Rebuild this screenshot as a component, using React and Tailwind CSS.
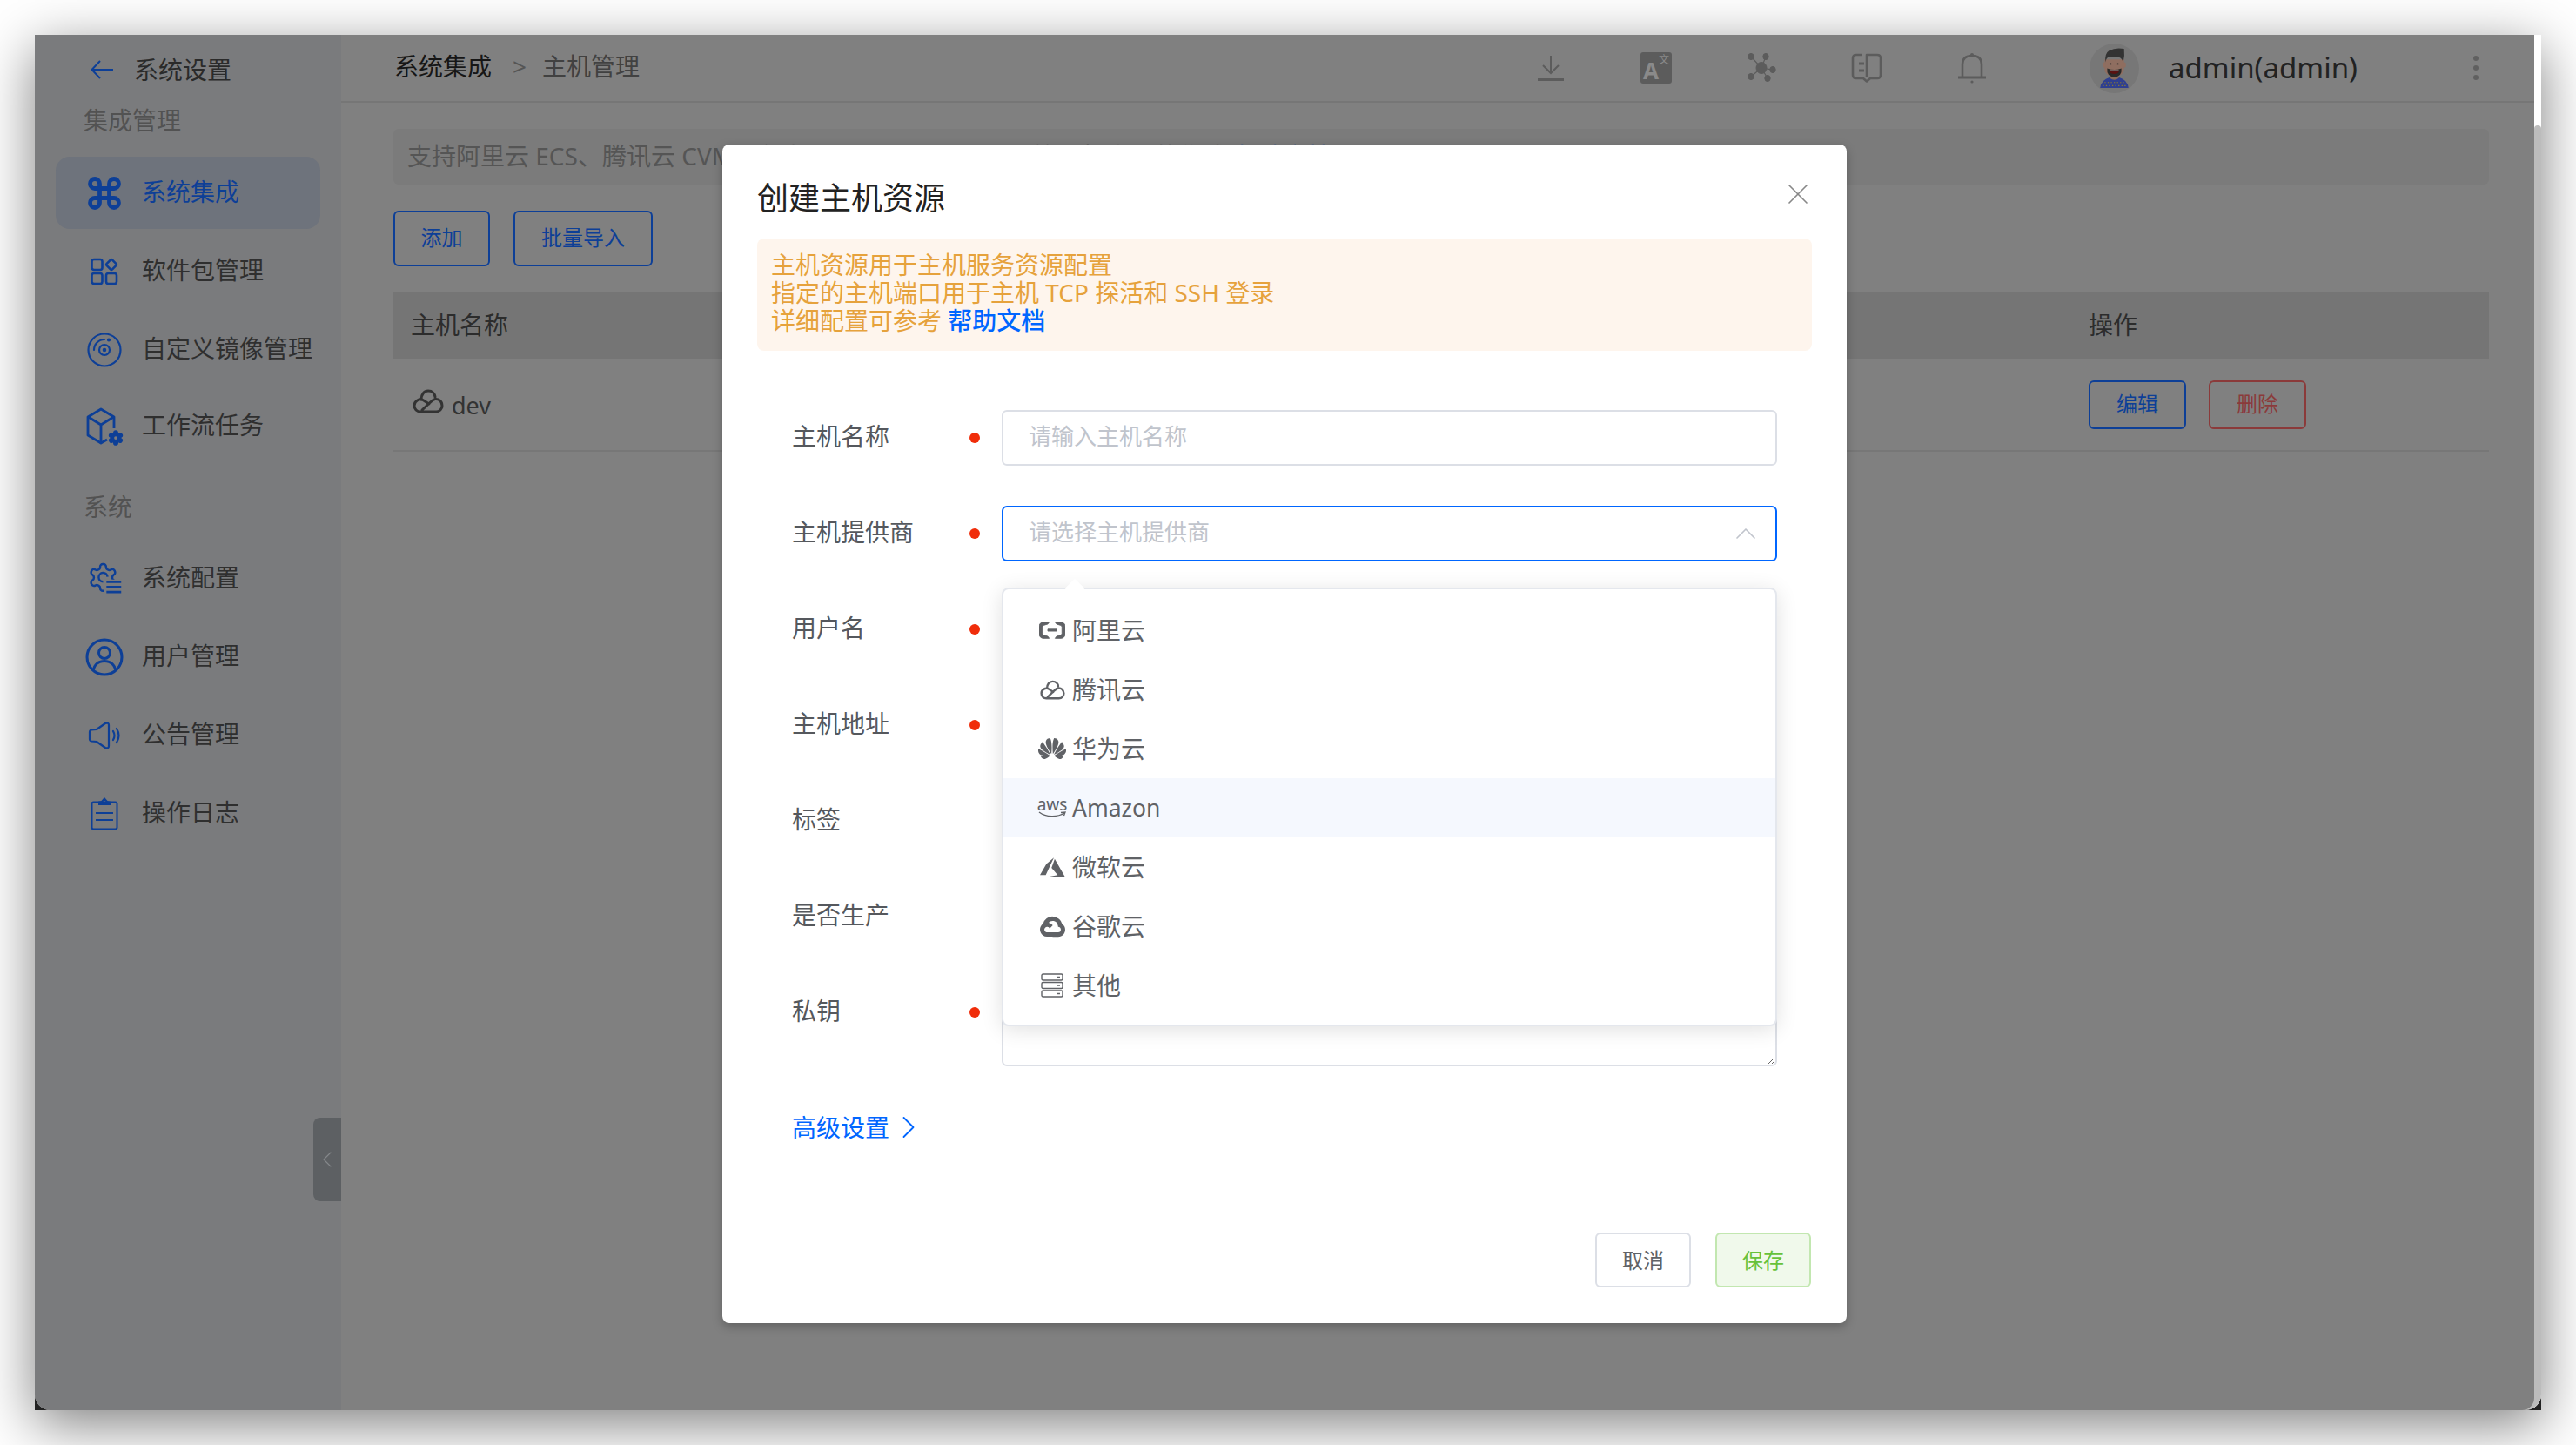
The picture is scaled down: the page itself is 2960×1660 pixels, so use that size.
// Create-host dialog over the integration settings page
import { ChevronLeft, ChevronRight, ChevronUp, Command, X } from 'lucide-react'
import { SiAlibabacloud, SiGooglecloud, SiHuawei } from 'react-icons/si'

const GEAR = 'M12.22 2h-.44a2 2 0 0 0-2 2v.18a2 2 0 0 1-1 1.73l-.43.25a2 2 0 0 1-2 0l-.15-.08a2 2 0 0 0-2.73.73l-.22.38a2 2 0 0 0 .73 2.73l.15.1a2 2 0 0 1 1 1.72v.51a2 2 0 0 1-1 1.74l-.15.09a2 2 0 0 0-.73 2.73l.22.38a2 2 0 0 0 2.73.73l.15-.08a2 2 0 0 1 2 0l.43.25a2 2 0 0 1 1 1.73V20a2 2 0 0 0 2 2h.44a2 2 0 0 0 2-2v-.18a2 2 0 0 1 1-1.73l.43-.25a2 2 0 0 1 2 0l.15.08a2 2 0 0 0 2.73-.73l.22-.39a2 2 0 0 0-.73-2.73l-.15-.08a2 2 0 0 1-1-1.74v-.5a2 2 0 0 1 1-1.74l.15-.09a2 2 0 0 0 .73-2.73l-.22-.38a2 2 0 0 0-2.73-.73l-.15.08a2 2 0 0 1-2 0l-.43-.25a2 2 0 0 1-1-1.73V4a2 2 0 0 0-2-2z'

// ---- sidebar icons
function GridIcon() {
  return (
    <svg width="32" height="31" viewBox="0 0 32 31" fill="none" stroke="currentColor" strokeWidth="2.6">
      <rect x="1.5" y="2" width="12" height="12" rx="2.5" />
      <rect x="1.5" y="18" width="12" height="12" rx="2.5" />
      <rect x="18" y="18" width="12" height="12" rx="2.5" />
      <rect x="19.5" y="3.5" width="9" height="9" rx="1.5" transform="rotate(45 24 8)" />
    </svg>
  )
}
function DiscIcon() {
  return (
    <svg width="40" height="40" viewBox="0 0 40 40" fill="none" stroke="currentColor" strokeWidth="2.2">
      <circle cx="20" cy="20" r="18.5" />
      <circle cx="20" cy="20" r="6" />
      <circle cx="20" cy="20" r="1.2" fill="currentColor" />
      <path d="M8 20 A12 12 0 0 1 20 8" strokeLinecap="round" />
      <circle cx="25" cy="8.5" r="1" fill="currentColor" />
    </svg>
  )
}
function BoxGearIcon() {
  return (
    <svg width="43" height="44" viewBox="0 0 43 44" fill="none" stroke="currentColor" strokeWidth="2.8" strokeLinejoin="round">
      <path d="M24 37 L17 41 L2 32 V11 L17 2 L32 11 V24" />
      <path d="M2.5 11 L17 20 L31.5 11 M17 20 V40" />
      <svg x="25" y="26" width="18" height="18" viewBox="0 0 24 24" strokeWidth="3.5" fill="currentColor">
        <path d={GEAR} />
        <circle cx="12" cy="12" r="2.5" fill="#7a7b7d" stroke="none" />
      </svg>
    </svg>
  )
}
function ConfigIcon() {
  return (
    <svg width="40" height="40" viewBox="0 0 26 26" fill="none" stroke="currentColor" strokeWidth="1.6">
      <path d={GEAR} />
      <rect x="13" y="13.5" width="13" height="13" fill="#7a7b7d" stroke="none" />
      <path d="M15.3 11.5a3.3 3.3 0 1 0-3.3 3.6" />
      <path d="M14.5 15.2H25.5M14.5 19H25.5M14.5 22.8H25.5" strokeWidth="1.7" />
    </svg>
  )
}
function UserIcon() {
  return (
    <svg width="44" height="44" viewBox="0 0 44 44" fill="none" stroke="currentColor" strokeWidth="3">
      <circle cx="22" cy="22" r="20" />
      <circle cx="22" cy="17" r="6.5" />
      <path d="M9 37 C11 29 16 26.5 22 26.5 C28 26.5 33 29 35 37" />
    </svg>
  )
}
function SpeakerIcon() {
  return (
    <svg width="38" height="32" viewBox="0 0 38 32" fill="none" stroke="currentColor" strokeWidth="2.2" strokeLinejoin="round">
      <path d="M2 12 Q2 10 4 9.5 L10 9 L20 2 Q24 0.5 24 4 V28 Q24 31.5 20 30 L10 23 L4 22.5 Q2 22 2 20 Z" />
      <path d="M29 11 Q32 16 29 21 M33 8 Q38 16 33 24" strokeLinecap="round" />
    </svg>
  )
}
function ClipboardIcon() {
  return (
    <svg width="32" height="38" viewBox="0 0 32 38" fill="none" stroke="currentColor" strokeWidth="2">
      <rect x="1.5" y="5.5" width="29" height="31" rx="2" />
      <path d="M10 5.5 L13 5 L16 1.5 L19 5 L22 5.5 V8 H10 Z" />
      <path d="M6 18 H26 M6 26 H26" />
    </svg>
  )
}

// ---- provider icons
function TencentIcon({ className }) {
  return (
    <svg className={className} viewBox="0 0 36 28" fill="none" stroke="currentColor" strokeWidth="3" strokeLinecap="round">
      <path d="M10 12 C10 6 13.5 2 18 2 C22.5 2 25.5 5 26 9" />
      <path d="M19 17 L12 12.5 C8 10.5 2 13.5 2 19 C2 23 5 26 9 26 H27 C31 26 34 23 34 19 C34 14 30 11 26 11.5 C23.5 12 22 13.5 20 15.5 L11 24" />
    </svg>
  )
}
function AwsIcon() {
  return (
    <span className="flex flex-col items-center w-[32px]">
      <span className="text-[19px] leading-[16px] text-[#606266]">aws</span>
      <svg width="32" height="8" viewBox="0 0 32 8" fill="none" stroke="#606266" strokeWidth="1.4">
        <path d="M1 1 C9 7 22 7 30 2" />
        <path d="M26 1.5 L31 1 L29.5 5" />
      </svg>
    </span>
  )
}
function AzureIcon() {
  return (
    <svg width="29" height="29" viewBox="0 0 24 24" fill="currentColor">
      <path d="M5.483 21.3H24L14.025 4.013l-3.038 8.347 5.836 6.938L5.483 21.3zM13.23 2.7L6.105 8.677 0 19.253h5.505v.014L13.23 2.7z" />
    </svg>
  )
}
function ServerIcon() {
  return (
    <svg width="26" height="28" viewBox="0 0 26 28" fill="none" stroke="currentColor" strokeWidth="1.4">
      <rect x="1" y="1" width="24" height="7" rx="1.5" />
      <rect x="1" y="10.5" width="24" height="7" rx="1.5" />
      <rect x="1" y="20" width="24" height="7" rx="1.5" />
      <path d="M18 4.5 H22 M18 14 H22 M18 23.5 H22" />
    </svg>
  )
}

// ---- header icons
function DownloadIcon() {
  return (
    <svg width="30" height="30" viewBox="0 0 30 30" fill="none" stroke="#5c5c5c" strokeWidth="2">
      <path d="M15 1 V21 M6 12 L15 21 L24 12" />
      <path d="M0 28.5 H30" strokeWidth="3" />
    </svg>
  )
}
function NodesIcon() {
  return (
    <svg width="36" height="36" viewBox="0 0 36 36" fill="#5c5c5c" stroke="#5c5c5c">
      <path d="M6 5 L18 18 M23 5 L18 18 M31 20 L18 18 M6 28 L18 18 M25 30 L18 18" strokeWidth="1.2" />
      <ellipse cx="18" cy="18" rx="6" ry="6.5" />
      <ellipse cx="6" cy="5" rx="3.2" ry="3.6" />
      <ellipse cx="23" cy="5" rx="3.2" ry="3.6" />
      <ellipse cx="31" cy="20" rx="3.2" ry="3.6" />
      <ellipse cx="6" cy="28" rx="3.2" ry="3.6" />
      <ellipse cx="25" cy="30" rx="3.2" ry="3.6" />
    </svg>
  )
}
function BookIcon() {
  return (
    <svg width="36" height="34" viewBox="0 0 36 34" fill="none" stroke="#5c5c5c" strokeWidth="2.6" strokeLinejoin="round">
      <path d="M13 2 H6 Q2 2 2 6 V25 Q2 29 6 29 H14 L18 32.5 L22 29 H30 Q34 29 34 25 V6 Q34 2 30 2 H18 V27" />
      <path d="M9 12 H15 M9 20 H15" strokeWidth="3" />
    </svg>
  )
}
function BellIcon() {
  return (
    <svg width="34" height="36" viewBox="0 0 34 36" fill="none" stroke="#5c5c5c" strokeWidth="2.6">
      <path d="M6 28 V14 Q6 4 17 4 Q28 4 28 14 V28" />
      <path d="M1 29 H33" strokeWidth="2.8" />
      <circle cx="17" cy="3" r="2" fill="#5c5c5c" stroke="none" />
      <circle cx="17" cy="34" r="1.6" fill="#5c5c5c" stroke="none" />
    </svg>
  )
}
function Avatar() {
  return (
    <svg width="57" height="57" viewBox="0 0 56 56" className="shrink-0">
      <circle cx="28" cy="28" r="28" fill="#777777" />
      <path d="M12 50 Q13 41 23 38 H33 Q43 41 44 50 Z" fill="#2f3f90" />
      <path d="M23 33 H33 V39 Q28 43 23 39 Z" fill="#8a6b5c" />
      <path d="M17 18 H39 V28 Q39 37 28 37 Q17 37 17 28 Z" fill="#8f6e60" />
      <rect x="15" y="21" width="3" height="6" rx="1.5" fill="#8f6e60" />
      <rect x="38" y="21" width="3" height="6" rx="1.5" fill="#8f6e60" />
      <path d="M18 21 Q17 11 22 8 Q30 4 39 6 Q40 14 38 21 Q36 15 31 15 H22 Q19 16 18 21 Z" fill="#333333" />
      <path d="M20 28 Q28 31 36 28 Q37 37 28 38 Q19 37 20 28 Z" fill="#2a2a2a" />
      <path d="M22.5 30 H33.5 Q33 34.5 28 34.5 Q23 34.5 22.5 30 Z" fill="#5a1212" />
      <path d="M23 30 H33 V31 H23 Z" fill="#9a9a9a" />
      <circle cx="24" cy="23" r="0.9" fill="#222" />
      <circle cx="32" cy="23" r="0.9" fill="#222" />
      <path d="M17 44 H39 M15 47.5 H41" stroke="#8a7a30" strokeWidth="1.1" strokeDasharray="1.3 2.2" />
    </svg>
  )
}

const GROUP_A = [
  { label: '系统集成', icon: <Command size={44} strokeWidth={2.6} />, active: true },
  { label: '软件包管理', icon: <GridIcon /> },
  { label: '自定义镜像管理', icon: <DiscIcon />, tight: true },
  { label: '工作流任务', icon: <BoxGearIcon /> },
]
const GROUP_B = [
  { label: '系统配置', icon: <ConfigIcon /> },
  { label: '用户管理', icon: <UserIcon /> },
  { label: '公告管理', icon: <SpeakerIcon /> },
  { label: '操作日志', icon: <ClipboardIcon /> },
]

const PROVIDERS = [
  { label: '阿里云', icon: <SiAlibabacloud size={30} stroke="currentColor" strokeWidth={0.7} /> },
  { label: '腾讯云', icon: <TencentIcon className="w-[29px] h-[23px]" /> },
  { label: '华为云', icon: <SiHuawei size={32} /> },
  { label: 'Amazon', icon: <AwsIcon />, hover: true },
  { label: '微软云', icon: <AzureIcon /> },
  { label: '谷歌云', icon: <SiGooglecloud size={29} /> },
  { label: '其他', icon: <ServerIcon /> },
]

function NavItem({ item }) {
  return (
    <div className={`flex items-center h-[83px] pl-[34px] gap-[21px] rounded-[16px] text-[28px] ${item.tight ? 'mb-[5px]' : 'mb-[7px]'} ${item.active ? 'bg-[#6e737c] text-[#0d3f97]' : 'text-[#2f2f2f]'}`}>
      <span className="w-[44px] h-[44px] flex items-center justify-center text-[#0d3f97] shrink-0">{item.icon}</span>
      <span className="whitespace-nowrap pb-[4px]">{item.label}</span>
    </div>
  )
}

function Sidebar() {
  return (
    <aside className="relative w-[352px] shrink-0 bg-[#7a7b7d] pl-[24px] pr-[24px]">
      <div className="flex items-center h-[40px] mt-[20px] pl-[40px] gap-[24px] text-[28px] text-[#2a2a2a]">
        <svg width="26" height="24" viewBox="0 0 26 24" fill="none" stroke="#0d3f97" strokeWidth="2">
          <path d="M26 12 H2 M11 2 L1.5 12 L11 22" />
        </svg>
        <span>系统设置</span>
      </div>
      <p className="h-[40px] mt-[18px] ml-[32px] text-[28px] leading-[40px] text-[#525252]">集成管理</p>
      <nav className="mt-[22px]">
        {GROUP_A.map((it) => <NavItem key={it.label} item={it} />)}
      </nav>
      <p className="h-[40px] mt-[31px] ml-[32px] text-[28px] leading-[40px] text-[#525252]">系统</p>
      <nav className="mt-[21px]">
        {GROUP_B.map((it) => <NavItem key={it.label} item={it} />)}
      </nav>
      {/* collapse handle */}
      <div className="absolute right-0 top-[1244px] w-[32px] h-[96px] rounded-l-[8px] bg-[#5d6063] flex items-center justify-center text-[#85888b]">
        <ChevronLeft size={46} strokeWidth={0.8} />
      </div>
    </aside>
  )
}

function Header() {
  return (
    <header className="flex items-center h-[78px] shrink-0 border-b-2 border-[#767676]">
      <div className="flex items-center ml-[61px] pb-[4px] text-[28px]">
        <span className="text-[#161616]">系统集成</span>
        <span className="ml-[24px] mr-[18px] text-[#555555]">&gt;</span>
        <span className="text-[#414141]">主机管理</span>
      </div>
      <div className="flex items-center gap-[61px] ml-auto">
        <span className="w-[60px] flex justify-center"><DownloadIcon /></span>
        <span className="w-[60px] flex justify-center">
          <span className="flex items-start justify-center w-[36px] h-[36px] pt-[2px] rounded-[3px] bg-[#5c5c5c] text-[#8a8a8a] leading-none">
            <span className="text-[26px] font-bold mt-[6px]">A</span>
            <span className="text-[12px] mt-[1px]">文</span>
          </span>
        </span>
        <span className="w-[60px] flex justify-center"><NodesIcon /></span>
        <span className="w-[60px] flex justify-center"><BookIcon /></span>
        <span className="w-[60px] flex justify-center"><BellIcon /></span>
      </div>
      <div className="ml-[105px]"><Avatar /></div>
      <span className="ml-[34px] w-[217px] whitespace-nowrap text-[33px] text-[#222222]">admin(admin)</span>
      <span className="ml-[133px] mr-[64px] flex flex-col gap-[5px]">
        <i className="block w-[6px] h-[6px] rounded-full bg-[#606060]" />
        <i className="block w-[6px] h-[6px] rounded-full bg-[#606060]" />
        <i className="block w-[6px] h-[6px] rounded-full bg-[#606060]" />
      </span>
    </header>
  )
}

function Outline({ color, children, className = '' }) {
  return (
    <button className={`flex items-center justify-center border-2 rounded-[6px] pb-[2px] text-[24px] ${color} ${className}`}>
      {children}
    </button>
  )
}

function HostPage() {
  return (
    <main className="flex-1 flex flex-col min-w-0 bg-[#808080]">
      <Header />
      <div className="pl-[60px] pr-[52px]">
        <div className="flex items-center h-[64px] mt-[30px] pl-[16px] pb-[2px] rounded-[6px] bg-[#7b7b7b] text-[28px] text-[#555555] whitespace-nowrap overflow-hidden">
          支持阿里云 ECS、腾讯云 CVM、华为云 ECS、亚马逊 EC2 等主机资源的集成&nbsp;
          <span className="text-[#0d3f97]">帮助文档</span>
        </div>
        <div className="flex gap-[27px] mt-[30px]">
          <Outline color="border-[#0d3f97] text-[#0d3f97]" className="w-[111px] h-[64px]">添加</Outline>
          <Outline color="border-[#0d3f97] text-[#0d3f97]" className="w-[160px] h-[64px]">批量导入</Outline>
        </div>
        <div className="flex items-center h-[76px] mt-[30px] pb-[2px] bg-[#757575] text-[28px] text-[#2c2c2c]">
          <span className="flex-1 pl-[20px]">主机名称</span>
          <span className="w-[460px]">操作</span>
        </div>
        <div className="flex items-center h-[107px] border-b-2 border-[#777777]">
          <div className="flex-1 flex items-center gap-[9px] pl-[22px] text-[27px] text-[#333333]">
            <TencentIcon className="w-[36px] h-[28px] -mt-[8px]" />
            <span className="mt-[3px]">dev</span>
          </div>
          <div className="w-[460px] flex gap-[26px]">
            <Outline color="border-[#0d3f97] text-[#0d3f97]" className="w-[112px] h-[56px]">编辑</Outline>
            <Outline color="border-[#8b3a3a] text-[#8b3a3a]" className="w-[112px] h-[56px]">删除</Outline>
          </div>
        </div>
      </div>
    </main>
  )
}

function Field({ label, required, children }) {
  return (
    <div className="flex items-start mb-[46px] last:mb-0 pl-[80px] pr-[80px]">
      <span className="w-[204px] h-[64px] leading-[60px] text-[28px] text-[#55585d]">{label}</span>
      <span className="w-[37px] h-[64px] flex items-center">
        {required && <i className="block w-[12px] h-[12px] rounded-full bg-[#f02d0a]" />}
      </span>
      <div className="flex-1 relative">{children}</div>
    </div>
  )
}

function Text({ placeholder }) {
  return (
    <input
      placeholder={placeholder}
      className="block w-full h-[64px] px-[29px] pb-[4px] rounded-[6px] border-2 border-[#dcdfe6] text-[26px] placeholder:text-[#c0c4cc] outline-none"
    />
  )
}

function ProviderMenu() {
  return (
    <div className="absolute z-10 left-0 right-0 top-[94px] h-[504px] pt-[13px] rounded-[8px] border-2 border-[#e4e7ed] bg-white shadow-[0_4px_24px_rgba(0,0,0,0.12)]">
      <i className="absolute left-[74px] -top-[9px] block w-[16px] h-[16px] rotate-45 bg-white" />
      {PROVIDERS.map((p) => (
        <div key={p.label} className={`relative flex items-center h-[68px] pl-[40px] gap-[7px] text-[#606266] ${p.hover ? 'bg-[#f5f8fe] text-[26.5px]' : 'text-[28px]'}`}>
          <span className="w-[32px] flex justify-center shrink-0">{p.icon}</span>
          <span className={p.hover ? 'mt-[2px]' : ''}>{p.label}</span>
        </div>
      ))}
    </div>
  )
}

function HostDialog() {
  return (
    <div className="absolute z-20 left-[790px] top-[126px] w-[1292px] h-[1354px] rounded-[8px] bg-white shadow-[0_4px_12px_rgba(0,0,0,0.25)] flex flex-col">
      <div className="relative flex items-center justify-between h-[50px] mt-[37px] px-[40px]">
        <h2 className="text-[36px] text-[#222222] font-normal">创建主机资源</h2>
        <X size={40} strokeWidth={1} className="text-[#888888] -mt-[10px] -mr-[4px]" />
      </div>
      <div className="mx-[40px] mt-[21px] h-[129px] pt-[14px] pl-[16px] rounded-[8px] bg-[#fef5ed] text-[28px] leading-[32px] text-[#e6a23c]">
        <p>主机资源用于主机服务资源配置</p>
        <p>指定的主机端口用于主机 TCP 探活和 SSH 登录</p>
        <p>详细配置可参考 <a className="text-[#0066ff] font-medium">帮助文档</a></p>
      </div>
      <form className="mt-[68px]">
        <Field label="主机名称" required><Text placeholder="请输入主机名称" /></Field>
        <Field label="主机提供商" required>
          <div className="flex items-center justify-between h-[64px] pl-[29px] pr-[14px] pb-[3px] rounded-[6px] border-2 border-[#0066ff] text-[26px] text-[#c0c4cc]">
            请选择主机提供商
            <ChevronUp size={40} strokeWidth={1} className="mt-[3px]" />
          </div>
          <ProviderMenu />
        </Field>
        <Field label="用户名" required><Text placeholder="请输入用户名" /></Field>
        <Field label="主机地址" required><Text placeholder="请输入主机地址" /></Field>
        <Field label="标签"><Text placeholder="请输入标签" /></Field>
        <Field label="是否生产"><Text placeholder="" /></Field>
        <Field label="私钥" required>
          <textarea className="block w-full h-[94px] rounded-[6px] border-2 border-[#dcdfe6] outline-none" />
        </Field>
      </form>
      <div className="flex items-center h-[36px] mt-[52px] ml-[80px] text-[28px] text-[#0066ff]">
        高级设置
        <ChevronRight size={44} strokeWidth={1} />
      </div>
      <div className="flex justify-end gap-[28px] mt-[103px] pr-[41px]">
        <button className="w-[110px] h-[63px] rounded-[6px] border-2 border-[#dcdfe6] text-[24px] text-[#606266]">取消</button>
        <button className="w-[110px] h-[63px] rounded-[6px] border-2 border-[#c2e7b0] bg-[#f0f9eb] text-[24px] text-[#67c23a]">保存</button>
      </div>
    </div>
  )
}

export default function App() {
  return (
    <div className="w-[2960px] h-[1660px] p-[40px] bg-white overflow-hidden [font-family:'Noto_Sans','Noto_Sans_CJK_SC',sans-serif]">
      <div className="w-[2880px] h-[1580px] bg-[#222222] shadow-[0_16px_60px_rgba(0,0,0,0.5)]">
        <div className="relative flex h-full rounded-b-[18px] overflow-hidden bg-[#bcbcbc]">
          <div className="flex flex-1 min-w-0 rounded-br-[14px] overflow-hidden">
            <Sidebar />
            <HostPage />
          </div>
          {/* scrollbar */}
          <div className="w-[8px] shrink-0 flex flex-col bg-white">
            <div className="h-[104px]" />
            <div className="flex-1 rounded-t-[4px] bg-[#bcbcbc]" />
          </div>
          <HostDialog />
        </div>
      </div>
    </div>
  )
}
